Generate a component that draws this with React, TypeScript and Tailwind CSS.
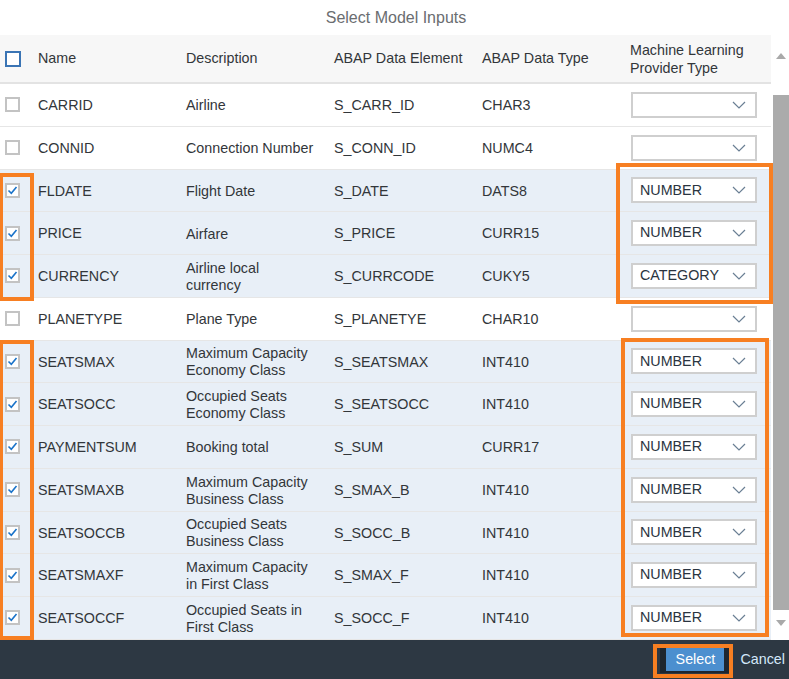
import React from "react";

type Row = {
  name: string;
  desc: string[];
  el: string;
  type: string;
  ml: string;
  checked: boolean;
};

const rows: Row[] = [
  { name: "CARRID", desc: ["Airline"], el: "S_CARR_ID", type: "CHAR3", ml: "", checked: false },
  { name: "CONNID", desc: ["Connection Number"], el: "S_CONN_ID", type: "NUMC4", ml: "", checked: false },
  { name: "FLDATE", desc: ["Flight Date"], el: "S_DATE", type: "DATS8", ml: "NUMBER", checked: true },
  { name: "PRICE", desc: ["Airfare"], el: "S_PRICE", type: "CURR15", ml: "NUMBER", checked: true },
  { name: "CURRENCY", desc: ["Airline local", "currency"], el: "S_CURRCODE", type: "CUKY5", ml: "CATEGORY", checked: true },
  { name: "PLANETYPE", desc: ["Plane Type"], el: "S_PLANETYE", type: "CHAR10", ml: "", checked: false },
  { name: "SEATSMAX", desc: ["Maximum Capacity", "Economy Class"], el: "S_SEATSMAX", type: "INT410", ml: "NUMBER", checked: true },
  { name: "SEATSOCC", desc: ["Occupied Seats", "Economy Class"], el: "S_SEATSOCC", type: "INT410", ml: "NUMBER", checked: true },
  { name: "PAYMENTSUM", desc: ["Booking total"], el: "S_SUM", type: "CURR17", ml: "NUMBER", checked: true },
  { name: "SEATSMAXB", desc: ["Maximum Capacity", "Business Class"], el: "S_SMAX_B", type: "INT410", ml: "NUMBER", checked: true },
  { name: "SEATSOCCB", desc: ["Occupied Seats", "Business Class"], el: "S_SOCC_B", type: "INT410", ml: "NUMBER", checked: true },
  { name: "SEATSMAXF", desc: ["Maximum Capacity", "in First Class"], el: "S_SMAX_F", type: "INT410", ml: "NUMBER", checked: true },
  { name: "SEATSOCCF", desc: ["Occupied Seats in", "First Class"], el: "S_SOCC_F", type: "INT410", ml: "NUMBER", checked: true },
];

function Checkbox({ checked }: { checked: boolean }) {
  return (
    <div className="w-[15px] h-[15px] border-2 border-[#c3c3c3] bg-white flex items-center justify-center">
      {checked && (
        <svg width="11" height="11" viewBox="0 0 11 11">
          <path d="M1.5 5.5 L4.3 8.3 L9.5 2" fill="none" stroke="#1a73c9" strokeWidth="1.6" />
        </svg>
      )}
    </div>
  );
}

function Dropdown({ value }: { value: string }) {
  return (
    <div className="w-[126px] h-[26px] border-2 border-[#cfcfcf] bg-white flex items-center justify-between pl-[7px] pr-[9px]">
      <span className="text-[14.3px] text-[#2a3440]">{value}</span>
      <svg width="14" height="8" viewBox="0 0 14 8">
        <path d="M1 1 L7 7 L13 1" fill="none" stroke="#6a7f94" strokeWidth="1.2" />
      </svg>
    </div>
  );
}

const grid = "grid grid-cols-[38px_148px_148px_148px_148px_141px]";

export default function App() {
  return (
    <div
      className="relative w-[789px] h-[679px] bg-white overflow-hidden text-[#32363a]"
      style={{ fontFamily: '"Liberation Sans", Arial, sans-serif' }}
    >
      {/* Title */}
      <div className="h-[35px] flex items-center justify-center text-[16px] text-[#6a6d70] pl-[3px]">
        Select Model Inputs
      </div>

      <div className="flex h-[605px]">
        {/* Table */}
        <div className="w-[771px] flex flex-col">
          <div className={`${grid} h-[49px] bg-[#f7f7f7] border-b-2 border-[#e3e3e3] items-center text-[14.3px]`}>
            <div className="pl-[5px]">
              <div className="w-[16px] h-[16px] border-2 border-[#3a74b4] bg-white" />
            </div>
            <div>Name</div>
            <div>Description</div>
            <div>ABAP Data Element</div>
            <div>ABAP Data Type</div>
            <div className="leading-[18px]">
              Machine Learning
              <br />
              Provider Type
            </div>
          </div>
          {rows.map((r) => (
            <div
              key={r.name}
              className={`${grid} h-[42.75px] items-center text-[14.3px] border-b border-[#e6e6e6] ${
                r.checked ? "bg-[#e8eff7]" : "bg-white"
              }`}
            >
              <div className="pl-[5px]">
                <Checkbox checked={r.checked} />
              </div>
              <div className="pt-[2px]">{r.name}</div>
              <div className="leading-[17px] pt-[2px]">
                {r.desc.map((d, i) => (
                  <div key={i}>{d}</div>
                ))}
              </div>
              <div className="pt-[2px]">{r.el}</div>
              <div className="pt-[2px]">{r.type}</div>
              <div className="pl-[1px]">
                <Dropdown value={r.ml} />
              </div>
            </div>
          ))}
        </div>

        {/* Scrollbar */}
        <div className="w-[18px] flex flex-col items-end bg-white">
          <div className="h-[24px] w-full flex items-end justify-center pl-[2px]">
            <div className="w-0 h-0 border-l-[5px] border-r-[5px] border-b-[6px] border-l-transparent border-r-transparent border-b-[#a9a9a9]" />
          </div>
          <div className="h-[36px]" />
          <div className="w-[16px] h-[515px] bg-[#ababab]" />
          <div className="h-[10px]" />
          <div className="w-full flex justify-center pl-[2px]">
            <div className="w-0 h-0 border-l-[5px] border-r-[5px] border-t-[6px] border-l-transparent border-r-transparent border-t-[#a9a9a9]" />
          </div>
        </div>
      </div>

      {/* Footer */}
      <div className="h-[39px] bg-[#2d3843] flex items-center justify-end pr-[4px]">
        <div className="bg-[#1e262f] px-[6px] py-[2px] mr-[10px]">
          <div className="h-[23px] w-[58px] bg-[#4c8fcf] text-white text-[14.3px] flex items-center justify-center">
            Select
          </div>
        </div>
        <div className="text-[14.3px] text-[#d4e8fb]">Cancel</div>
      </div>

      {/* Orange highlight overlays */}
      <div className="absolute left-[-1px] top-[173px] w-[35px] h-[128px] border-4 border-[#f77f22]" />
      <div className="absolute left-[-1px] top-[340px] w-[35px] h-[300px] border-4 border-[#f77f22]" />
      <div className="absolute left-[616px] top-[163px] w-[157px] h-[141px] border-4 border-[#f77f22]" />
      <div className="absolute left-[621px] top-[338px] w-[148px] h-[299px] border-4 border-[#f77f22]" />
      <div className="absolute left-[653px] top-[644px] w-[80px] h-[34px] border-4 border-[#f77f22]" />
    </div>
  );
}
